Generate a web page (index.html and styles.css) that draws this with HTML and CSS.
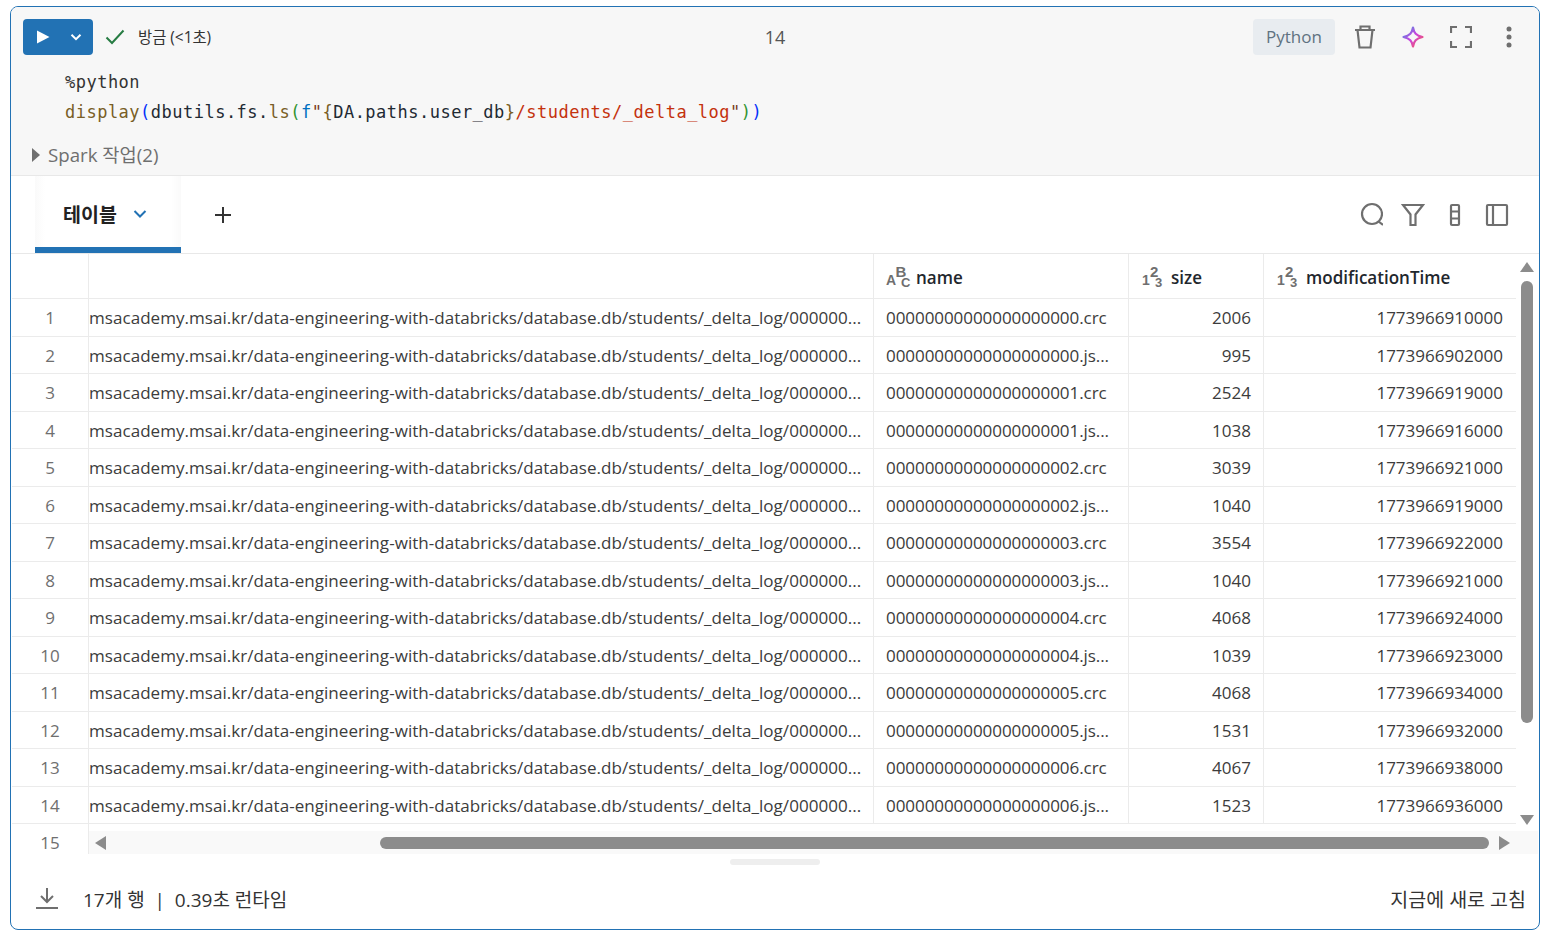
FILE: index.html
```html
<!DOCTYPE html>
<html lang="ko">
<head>
<meta charset="utf-8">
<title>Notebook cell</title>
<link rel="stylesheet" href="styles.css">
</head>
<body>
<main class="cell">
  <section class="cell-top">
    <div class="toolbar">
      <div class="toolbar-left">
        <div class="run-btn">
          <svg class="ic-play" width="14" height="14" viewBox="0 0 14 14"><path d="M1 .5v13L13.500 7z" fill="#fff"/></svg>
          <svg class="ic-chev" width="12" height="12" viewBox="0 0 12 12"><path d="M1.500 3.800 6 8.200l4.500-4.400" fill="none" stroke="#fff" stroke-width="2"/></svg>
        </div>
        <svg class="ic-check" width="20" height="16" viewBox="0 0 20 16"><path d="M1.500 8.500 7 14 18.500 1.500" fill="none" stroke="#277c43" stroke-width="2"/></svg>
        <span class="status">방금 (&lt;1초)</span>
      </div>
      <div class="cell-num">14</div>
      <div class="toolbar-right">
        <span class="lang">Python</span>
        <span class="tb-icon"><svg width="24" height="26" viewBox="0 0 24 26"><path d="M2 6h20M7.500 6V2.500h9V6M4.500 6l2 17.500h11l2-17.500" fill="none" stroke="#6f6f6f" stroke-width="2.200"/></svg></span>
        <span class="tb-icon"><svg width="22" height="22" viewBox="0 0 22 22"><defs><linearGradient id="sp" x1="0" y1="0" x2="1" y2="1"><stop offset="0" stop-color="#4299e0"/><stop offset=".5" stop-color="#ca42e0"/><stop offset="1" stop-color="#ff5f46"/></linearGradient></defs><path d="M11 1.500c1 5.500 3 7.800 9.500 9.500-6.500 1.700-8.500 4-9.500 9.500-1-5.500-3-7.800-9.500-9.500C8 9.300 10 7 11 1.500z" fill="none" stroke="url(#sp)" stroke-width="2.200" stroke-linejoin="round"/></svg></span>
        <span class="tb-icon"><svg width="22" height="22" viewBox="0 0 22 22"><path d="M1 7V1h6M15 1h6v6M21 15v6h-6M7 21H1v-6" fill="none" stroke="#6f6f6f" stroke-width="2.200"/></svg></span>
        <span class="tb-icon"><svg width="6" height="22" viewBox="0 0 6 22"><circle cx="3" cy="3" r="2.500" fill="#6f6f6f"/><circle cx="3" cy="11" r="2.500" fill="#6f6f6f"/><circle cx="3" cy="19" r="2.500" fill="#6f6f6f"/></svg></span>
      </div>
    </div>
    <pre class="code"><span class="c-kw">%python</span>
<span class="c-fn">display</span><span class="c-b1">(</span><span class="c-id">dbutils.fs.</span><span class="c-fn">ls</span><span class="c-b2">(</span><span class="c-f">f</span><span class="c-q">"</span><span class="c-br">{</span><span class="c-id">DA.paths.user_db</span><span class="c-br">}</span><span class="c-str">/students/_delta_log</span><span class="c-q">"</span><span class="c-b2">)</span><span class="c-b1">)</span></pre>
    <div class="spark">
      <svg width="8" height="14" viewBox="0 0 8 14"><path d="M0 0v14l8-7z" fill="#6f6f6f"/></svg>
      <span>Spark 작업(2)</span>
    </div>
  </section>

  <section class="tabs">
    <div class="tab">
      <span>테이블</span>
      <svg width="14" height="10" viewBox="0 0 14 10"><path d="M1.500 2 7 7.500 12.500 2" fill="none" stroke="#2272b4" stroke-width="2"/></svg>
    </div>
    <svg class="ic-plus" width="18" height="18" viewBox="0 0 18 18"><path d="M9 1v16M1 9h16" stroke="#333" stroke-width="2"/></svg>
    <div class="tab-tools">
      <svg width="24" height="26" viewBox="0 0 24 26"><circle cx="13" cy="12" r="10" fill="none" stroke="#6f6f6f" stroke-width="2.200"/><path d="M19.500 19.500l4.500 3.500" stroke="#6f6f6f" stroke-width="2.200"/></svg>
      <svg width="24" height="24" viewBox="0 0 24 24"><path d="M2 2h20l-7.500 9.500V22h-5V11.500z" fill="none" stroke="#6f6f6f" stroke-width="2.200"/></svg>
      <svg width="24" height="24" viewBox="0 0 24 24"><rect x="8" y="2" width="8" height="20" rx="1" fill="none" stroke="#6f6f6f" stroke-width="2.200"/><path d="M8 8.500h8M8 15.500h8" stroke="#6f6f6f" stroke-width="2.200"/></svg>
      <svg width="24" height="24" viewBox="0 0 24 24"><rect x="2" y="2" width="20" height="20" rx="1" fill="none" stroke="#6f6f6f" stroke-width="2.200"/><path d="M8 2v20" stroke="#6f6f6f" stroke-width="2.200"/></svg>
    </div>
  </section>

  <section class="grid-wrap">
    <div class="grid">
      <div class="row head">
        <div class="c idx"></div>
        <div class="c path"></div>
        <div class="c name"><span class="type"><span class="t-base">A</span><span class="t-up">B</span><span class="t-down">C</span></span>name</div>
        <div class="c size"><span class="type t-num"><span class="t-base">1</span><span class="t-up">2</span><span class="t-down">3</span></span>size</div>
        <div class="c time"><span class="type t-num"><span class="t-base">1</span><span class="t-up">2</span><span class="t-down">3</span></span>modificationTime</div>
      </div>
      <div class="row"><div class="c idx">1</div><div class="c path">msacademy.msai.kr/data-engineering-with-databricks/database.db/students/_delta_log/000000...</div><div class="c name">00000000000000000000.crc</div><div class="c size num">2006</div><div class="c time num">1773966910000</div></div>
      <div class="row"><div class="c idx">2</div><div class="c path">msacademy.msai.kr/data-engineering-with-databricks/database.db/students/_delta_log/000000...</div><div class="c name">00000000000000000000.js...</div><div class="c size num">995</div><div class="c time num">1773966902000</div></div>
      <div class="row"><div class="c idx">3</div><div class="c path">msacademy.msai.kr/data-engineering-with-databricks/database.db/students/_delta_log/000000...</div><div class="c name">00000000000000000001.crc</div><div class="c size num">2524</div><div class="c time num">1773966919000</div></div>
      <div class="row"><div class="c idx">4</div><div class="c path">msacademy.msai.kr/data-engineering-with-databricks/database.db/students/_delta_log/000000...</div><div class="c name">00000000000000000001.js...</div><div class="c size num">1038</div><div class="c time num">1773966916000</div></div>
      <div class="row"><div class="c idx">5</div><div class="c path">msacademy.msai.kr/data-engineering-with-databricks/database.db/students/_delta_log/000000...</div><div class="c name">00000000000000000002.crc</div><div class="c size num">3039</div><div class="c time num">1773966921000</div></div>
      <div class="row"><div class="c idx">6</div><div class="c path">msacademy.msai.kr/data-engineering-with-databricks/database.db/students/_delta_log/000000...</div><div class="c name">00000000000000000002.js...</div><div class="c size num">1040</div><div class="c time num">1773966919000</div></div>
      <div class="row"><div class="c idx">7</div><div class="c path">msacademy.msai.kr/data-engineering-with-databricks/database.db/students/_delta_log/000000...</div><div class="c name">00000000000000000003.crc</div><div class="c size num">3554</div><div class="c time num">1773966922000</div></div>
      <div class="row"><div class="c idx">8</div><div class="c path">msacademy.msai.kr/data-engineering-with-databricks/database.db/students/_delta_log/000000...</div><div class="c name">00000000000000000003.js...</div><div class="c size num">1040</div><div class="c time num">1773966921000</div></div>
      <div class="row"><div class="c idx">9</div><div class="c path">msacademy.msai.kr/data-engineering-with-databricks/database.db/students/_delta_log/000000...</div><div class="c name">00000000000000000004.crc</div><div class="c size num">4068</div><div class="c time num">1773966924000</div></div>
      <div class="row"><div class="c idx">10</div><div class="c path">msacademy.msai.kr/data-engineering-with-databricks/database.db/students/_delta_log/000000...</div><div class="c name">00000000000000000004.js...</div><div class="c size num">1039</div><div class="c time num">1773966923000</div></div>
      <div class="row"><div class="c idx">11</div><div class="c path">msacademy.msai.kr/data-engineering-with-databricks/database.db/students/_delta_log/000000...</div><div class="c name">00000000000000000005.crc</div><div class="c size num">4068</div><div class="c time num">1773966934000</div></div>
      <div class="row"><div class="c idx">12</div><div class="c path">msacademy.msai.kr/data-engineering-with-databricks/database.db/students/_delta_log/000000...</div><div class="c name">00000000000000000005.js...</div><div class="c size num">1531</div><div class="c time num">1773966932000</div></div>
      <div class="row"><div class="c idx">13</div><div class="c path">msacademy.msai.kr/data-engineering-with-databricks/database.db/students/_delta_log/000000...</div><div class="c name">00000000000000000006.crc</div><div class="c size num">4067</div><div class="c time num">1773966938000</div></div>
      <div class="row"><div class="c idx">14</div><div class="c path">msacademy.msai.kr/data-engineering-with-databricks/database.db/students/_delta_log/000000...</div><div class="c name">00000000000000000006.js...</div><div class="c size num">1523</div><div class="c time num">1773966936000</div></div>
      <div class="row"><div class="c idx">15</div></div>
    </div>
    <div class="vbar">
      <svg class="arrow-up" width="14" height="10" viewBox="0 0 14 10"><path d="M7 0l7 10H0z" fill="#8c8c8c"/></svg>
      <div class="vthumb"></div>
      <svg class="arrow-down" width="14" height="10" viewBox="0 0 14 10"><path d="M7 10 0 0h14z" fill="#8c8c8c"/></svg>
    </div>
    <div class="hbar">
      <svg width="11" height="14" viewBox="0 0 11 14"><path d="M0 7l11-7v14z" fill="#8c8c8c"/></svg>
      <div class="htrack"><div class="hthumb"></div></div>
      <svg width="11" height="14" viewBox="0 0 11 14"><path d="M11 7 0 0v14z" fill="#8c8c8c"/></svg>
    </div>
  </section>

  <div class="resize"></div>

  <footer class="foot">
    <svg width="22" height="22" viewBox="0 0 22 22"><path d="M11 1v13M5 9l6 6 6-6M0 21h22" fill="none" stroke="#6f6f6f" stroke-width="2"/></svg>
    <span class="foot-text">17개 행 &nbsp;|&nbsp; 0.39초 런타임</span>
    <span class="foot-right">지금에 새로 고침</span>
  </footer>
</main>
</body>
</html>
```
FILE: styles.css
```css
* { box-sizing: border-box; }
html, body { margin: 0; padding: 0; background: #fff; }
body {
  padding: 6px 2px 1px 10px;
  font-family: "Open Sans", "Noto Sans CJK KR", sans-serif;
  color: #333;
}
.cell {
  width: 1530px;
  height: 924px;
  border: 1px solid #2272b4;
  border-radius: 8px;
  overflow: hidden;
  display: flex;
  flex-direction: column;
}
.cell-top {
  height: 169px;
  background: #f7f7f7;
  border-bottom: 1px solid #e8e8e8;
  flex: none;
}
.toolbar {
  display: grid;
  grid-template-columns: 1fr auto 1fr;
  align-items: center;
  height: 36px;
  margin-top: 12px;
  padding: 0 6px 0 12px;
}
.toolbar-left { display: flex; align-items: center; }
.run-btn {
  width: 70px;
  height: 36px;
  background: #2272b4;
  border-radius: 4px;
  display: flex;
  align-items: center;
  padding-left: 13px;
  gap: 20px;
}
.ic-check { margin-left: 12px; }
.status { margin: 0 0 2px 13px; font-size: 15.400px; color: #333; }
.cell-num { font-size: 18px; color: #555; margin-right: 6px; }
.toolbar-right { display: flex; align-items: center; justify-content: flex-end; }
.lang {
  width: 82px;
  height: 36px;
  margin-right: 6px;
  padding-bottom: 2px;
  background: #e8ecf0;
  border-radius: 4px;
  color: #5f7281;
  font-size: 17px;
  display: flex;
  align-items: center;
  justify-content: center;
}
.tb-icon {
  width: 48px;
  display: flex;
  justify-content: center;
}
.code {
  margin: 12px 0 0 54px;
  font-family: "DejaVu Sans Mono", monospace;
  font-size: 17px;
  letter-spacing: 0.49px;
  line-height: 30px;
  color: #1f2a33;
}
.c-kw { color: #333; }
.c-fn { color: #795e26; }
.c-b1 { color: #0431fa; }
.c-b2 { color: #319331; }
.c-f { color: #0070c1; }
.c-str { color: #c4320d; }
.c-q { color: #7a3b1a; }
.c-br { color: #795e26; }
.c-id { color: #1f2a33; }
.spark {
  display: flex;
  align-items: center;
  gap: 8px;
  margin: 13px 0 0 21px;
  font-size: 18.700px;
  color: #6f6f6f;
  height: 26px;
}
.spark svg { margin-top: 3px; }
.tabs {
  height: 78px;
  flex: none;
  display: flex;
  align-items: center;
  padding: 0 10px 0 24px;
  border-bottom: 1px solid #e8e8e8;
}
.tab {
  align-self: stretch;
  width: 146px;
  height: 77px;
  border-bottom: 6px solid #2272b4;
  display: flex;
  align-items: center;
  padding: 4px 0 0 28px;
  gap: 16px;
  font-size: 19.500px;
  font-weight: 700;
  color: #222;
  background: linear-gradient(90deg, #fafafa 0, #fff 10px, #fff calc(100% - 10px), #fafafa 100%);
}
.ic-plus { margin-left: 33px; }
.tab-tools {
  margin-left: auto;
  display: flex;
  align-items: center;
  gap: 18px;
  padding-right: 20px;
}
.grid-wrap {
  position: relative;
  height: 600px;
  flex: none;
  overflow: hidden;
}
.grid {
  width: 1504px;
  margin-left: 1px;
}
.row {
  display: grid;
  grid-template-columns: 77px 785px 255px 135px 252px;
  height: 37.5px;
  border-bottom: 1px solid #ebebeb;
  font-size: 17.050px;
  line-height: 37px;
  color: #3c3c3c;
}
.row.head {
  height: 45px;
  color: #1f272d;
}
.c {
  border-right: 1px solid #ebebeb;
  white-space: nowrap;
  overflow: hidden;
}
.c.time { border-right: 0; }
.idx { text-align: center; color: #6f6f6f; }
.path { padding-left: 0; letter-spacing: 0.034px; }
.name { padding: 0 12px; letter-spacing: -0.08px; }
.size { padding: 0 12px; }
.time { padding: 0 13px 0 12px; }
.num { text-align: right; }
.head .c { display: flex; align-items: center; font-weight: 600; padding-top: 3px; letter-spacing: 0; }
.type {
  position: relative;
  height: 22px;
  width: 30px;
  flex: none;
  display: block;
  font-size: 15px;
  font-weight: 700;
  color: #6f6f6f;
  font-family: "Liberation Sans", sans-serif;
  line-height: 10px;
}
.type.t-num { width: 29px; margin-left: 1px; }
.t-base, .t-up, .t-down { position: absolute; }
.t-base { left: 0; top: 8px; font-size: 14px; }
.t-up { left: 9.500px; top: 0; }
.t-down { left: 15px; top: 11px; font-size: 13px; }
.t-num .t-up { left: 8px; }
.t-num .t-down { left: 13px; }
.vbar {
  position: absolute;
  top: 0;
  right: 0;
  width: 24px;
  height: 576px;
  display: flex;
  flex-direction: column;
  align-items: center;
  padding: 8px 0 0;
}
.vthumb {
  width: 12px;
  height: 442px;
  margin-top: 9px;
  border-radius: 6px;
  background: #8c8c8c;
}
.arrow-down { margin-top: 92px; }
.hbar {
  position: absolute;
  left: 78px;
  right: 1px;
  bottom: 0;
  height: 23px;
  background: #f9f9f9;
  display: flex;
  align-items: center;
  padding: 0 28px 0 6px;
  gap: 5px;
}
.htrack { flex: 1; position: relative; height: 12px; }
.hthumb {
  position: absolute;
  left: 269px;
  right: 5px;
  height: 12px;
  border-radius: 6px;
  background: #8c8c8c;
}
.resize {
  width: 90px;
  height: 6px;
  margin: 5px auto 0;
  border-radius: 3px;
  background: #eeeeee;
  flex: none;
}
.foot {
  flex: 1;
  display: flex;
  align-items: center;
  padding: 2px 13px 0 25px;
  font-size: 19px;
  color: #333;
}
.foot-text { margin: 1px 0 0 25px; }
.foot-right { margin-left: auto; font-size: 19.500px; }
```
